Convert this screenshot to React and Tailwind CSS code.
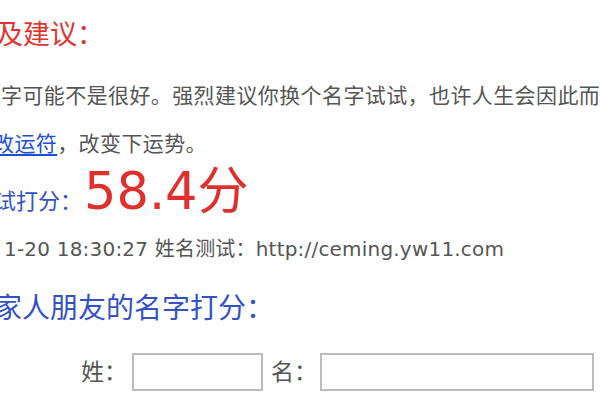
export default function App() {
  const font = "font-['DejaVu_Sans','Noto_Sans_CJK_SC',sans-serif]";

  return (
    <div className={`w-[600px] h-[400px] overflow-hidden bg-white ${font} whitespace-nowrap`}>
      {/* 评分及建议 */}
      <div className="h-[69px] flex items-center">
        <span className="-ml-[4px] text-[27px] leading-none text-[#e0352f]">及建议：</span>
      </div>

      <div className="h-[54px] flex items-center">
        <span className="ml-[1px] text-[21px] tracking-[0.4px] leading-none text-[#555]">
          字可能不是很好。强烈建议你换个名字试试，也许人生会因此而改变
        </span>
      </div>

      <div className="h-[42px] flex items-center text-[21px] tracking-[0.4px] leading-none">
        <a href="#" className="-ml-[7px] text-[#1d4fd6] underline underline-offset-[3px]">改运符</a>
        <span className="text-[#555]">，改变下运势。</span>
      </div>

      {/* 打分 */}
      <div className="h-[60px] flex items-baseline">
        <span className="-ml-[6px] text-[22px] leading-none text-[#3352c4]">试打分：</span>
        <span className="ml-[2px] text-[51px] leading-[54px] text-[#e0302d]">58.4分</span>
      </div>

      <div className="h-[48px] flex items-center">
        <span className="ml-[4px] text-[20px] tracking-[0.2px] leading-none text-[#555]">
          1-20 18:30:27 姓名测试：http://ceming.yw11.com
        </span>
      </div>

      {/* 给家人朋友打分 */}
      <div className="h-[72px] flex items-center">
        <span className="-ml-[6px] text-[28px] leading-none text-[#3352c4]">家人朋友的名字打分：</span>
      </div>

      <div className="mt-[8px] h-[38px] flex items-center text-[23px] leading-none text-[#555]">
        <span className="ml-[81px]">姓：</span>
        <input type="text" className="ml-[5px] w-[131px] h-[38px] border-2 border-[#bcbcbc] bg-white outline-none" />
        <span className="ml-[8px]">名：</span>
        <input type="text" className="ml-[3px] w-[274px] h-[38px] border-2 border-[#bcbcbc] bg-white outline-none" />
      </div>
    </div>
  );
}
